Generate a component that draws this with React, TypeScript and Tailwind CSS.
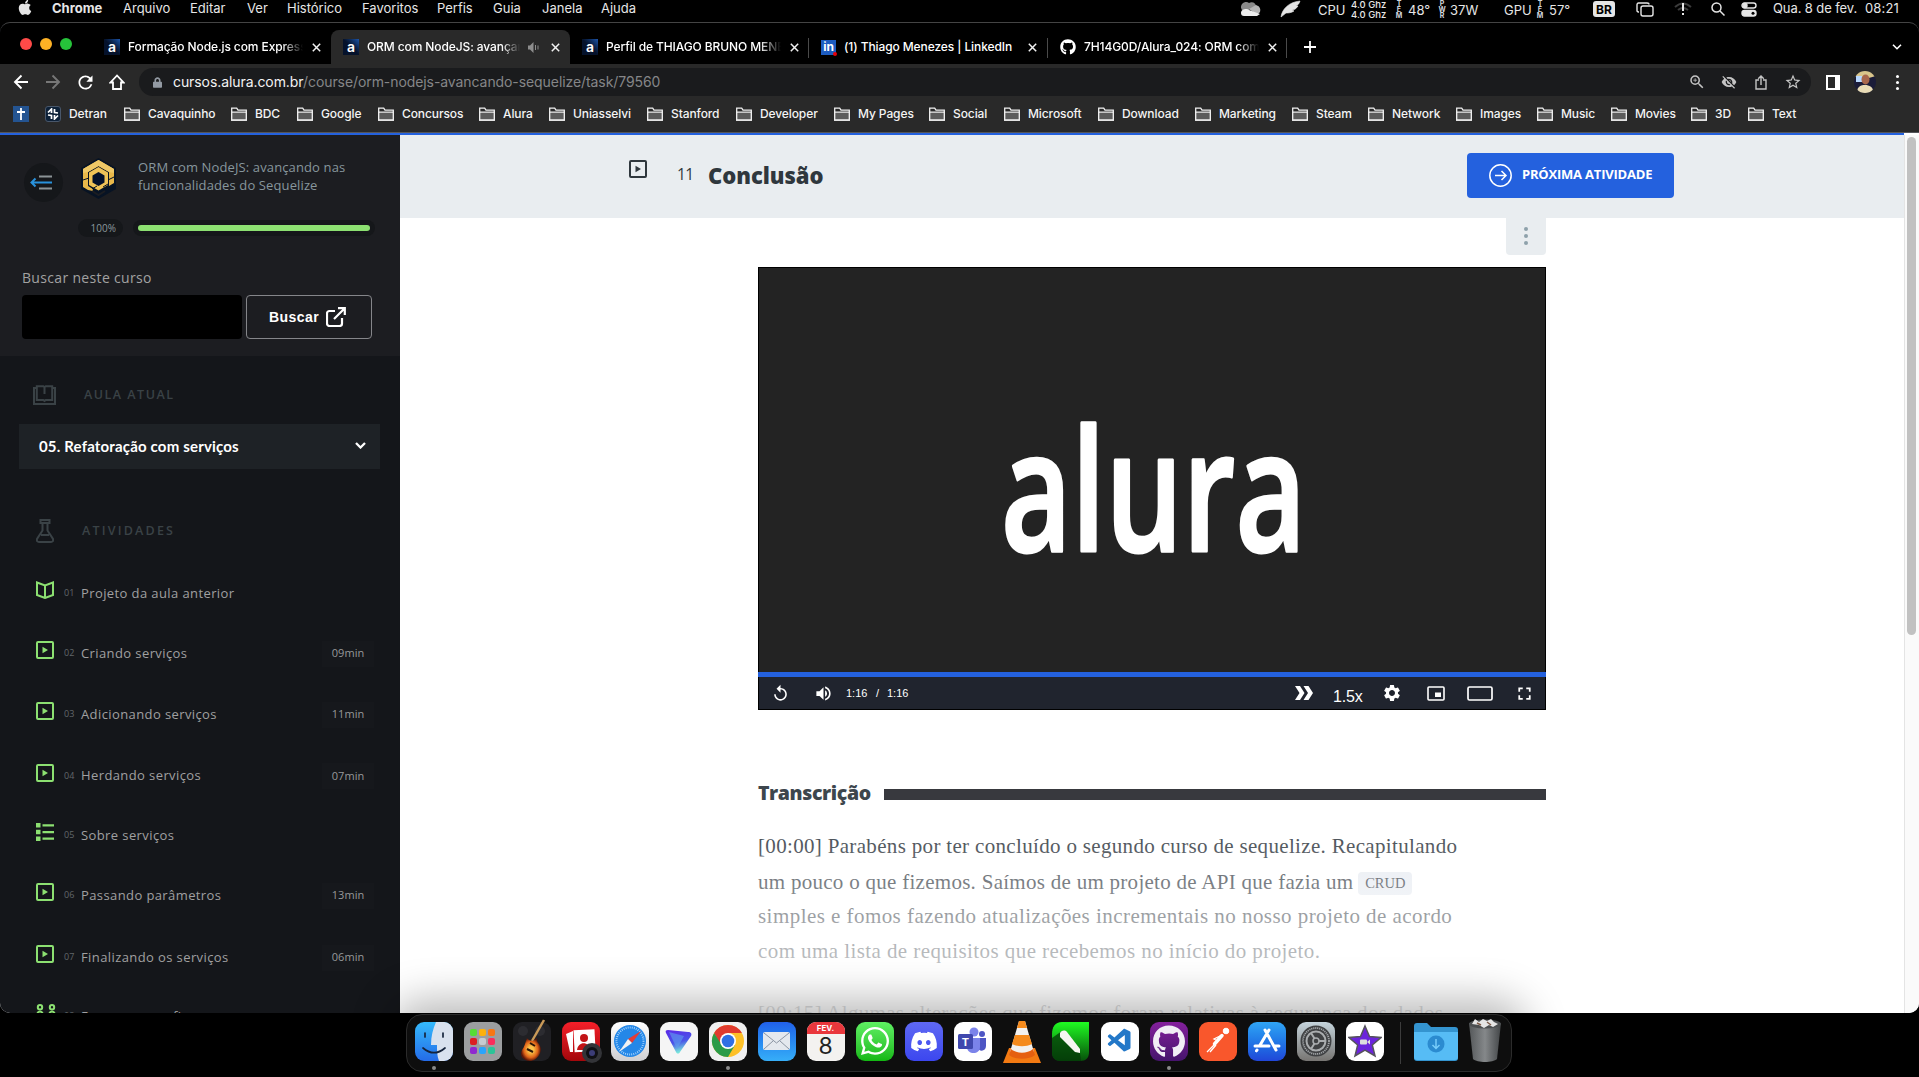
import React from "react";
import { FaApple, FaGithub, FaDiscord, FaWhatsapp, FaLock } from "react-icons/fa";
import { MdReplay, MdVolumeUp, MdSettings, MdFullscreen, MdVisibilityOff, MdZoomIn, MdStarBorder, MdRefresh } from "react-icons/md";
import { VscVscode } from "react-icons/vsc";

const menus: [string, string][] = [
  ["Arquivo", "w-[67px]"],
  ["Editar", "w-[57px]"],
  ["Ver", "w-[40px]"],
  ["Histórico", "w-[75px]"],
  ["Favoritos", "w-[75px]"],
  ["Perfis", "w-[56px]"],
  ["Guia", "w-[49px]"],
  ["Janela", "w-[59px]"],
  ["Ajuda", "w-[50px]"],
];

const Tiny = ({ t }: { t: string }) => (
  <span className="flex w-[6px] flex-col items-center pt-px text-[7px] font-bold leading-[6px] text-gray-300">
    {t.split("").map((c, i) => (
      <span key={i}>{c}</span>
    ))}
  </span>
);

function MenuBar() {
  return (
    <div className="flex h-[22px] shrink-0 items-start whitespace-nowrap bg-black text-[13px] leading-[17px] text-[#e6e6e6]">
      <div className="w-[52px] pl-[18px]">
        <FaApple className="mt-[-1px] h-[17px] w-[14px]" />
      </div>
      <b className="w-[71px] font-bold">Chrome</b>
      {menus.map(([m, w]) => (
        <span key={m} className={w}>{m}</span>
      ))}
      <div className="ml-auto flex w-[680px] items-start">
        <svg className="mr-[19px] mt-[2px] h-[14px] w-[22px]" viewBox="0 0 22 14">
          <path d="M4 9a5 5 0 0 1 6-8c4-2 7 1 7 3L6 10z" fill="#8a8a8a" />
          <path d="M10 7l7-4c3 1 5 3 4 7l-3 3z" fill="#b5b5b5" />
          <path d="M2 11c0-4 6-5 8-3l11 4-3 2H5c-2 0-3-1-3-3z" fill="#ededed" />
        </svg>
        <svg className="mr-[17px] h-[18px] w-[21px]" viewBox="0 0 21 18">
          <path d="M1 17C2 9 9 2 20 1c-1 3-2 4-4 5l2 0c-2 3-4 4-6 4l2 1c-3 2-6 2-8 2z" fill="#e6e6e6" stroke="#e6e6e6" strokeWidth=".6" />
        </svg>
        <span className="w-[33px] pt-[2px]">CPU</span>
        <span className="w-[45px] text-[9.5px] font-medium leading-[9.5px]">4.0 Ghz<br />4.0 Ghz</span>
        <Tiny t="TEM" />
        <span className="ml-[6px] w-[31px] pt-[2px]">48°</span>
        <Tiny t="PWR" />
        <span className="ml-[5px] w-[54px] pt-[2px]">37W</span>
        <span className="w-[33px] pt-[2px]">GPU</span>
        <Tiny t="TEM" />
        <span className="ml-[6px] w-[44px] pt-[2px]">57°</span>
        <span className="mt-[1px] flex h-[16px] w-[22px] items-center justify-center rounded-[3px] bg-[#e6e6e6] text-[12px] font-bold text-black">BR</span>
        <svg className="ml-[21px] mt-[2px] h-[15px] w-[18px]" viewBox="0 0 18 15" fill="none" stroke="#e6e6e6" strokeWidth="1.4">
          <rect x="5" y="4" width="12" height="10" rx="2" />
          <path d="M3 10H2.500C1.500 10 1 9.500 1 8.500V3c0-1 .5-2 1.500-2H11c1 0 2 .6 2 1.500" />
        </svg>
        <svg className="ml-[20px] mt-[2px] h-[14px] w-[18px]" viewBox="0 0 18 14" fill="none" stroke="#3c3c3c" strokeWidth="2">
          <path d="M1 5q8-7 16 0M4 8q5-4 10 0" />
          <path d="M9 1v8M9 11v2" stroke="#e6e6e6" />
        </svg>
        <svg className="ml-[19px] mt-[2px] h-[14px] w-[14px]" viewBox="0 0 14 14" fill="none" stroke="#e6e6e6" strokeWidth="1.5">
          <circle cx="5.500" cy="5.500" r="4.500" /><path d="M9 9l4.500 4.500" />
        </svg>
        <svg className="ml-[16px] mt-[2px] h-[15px] w-[16px]" viewBox="0 0 16 15" fill="none" stroke="#e6e6e6" strokeWidth="1.4">
          <rect x="1" y="1" width="14" height="5" rx="2.500" /><circle cx="4" cy="3.500" r="2" fill="#e6e6e6" />
          <rect x="1" y="8.500" width="14" height="5.500" rx="2.500" fill="#e6e6e6" /><circle cx="12" cy="11.200" r="1.500" fill="#000" stroke="none" />
        </svg>
        <span className="ml-[16px] w-[92px] tracking-[-0.1px]">Qua. 8 de fev.</span>
        <span className="tracking-[0.15px]">08:21</span>
      </div>
    </div>
  );
}

const AluraIcon = () => (
  <span className="flex h-4 w-4 shrink-0 items-center justify-center bg-gradient-to-tr from-[#05122b] via-[#05122b] to-[#1c54a8] text-[14px] font-semibold leading-none text-white">a</span>
);
const LinkedinIcon = () => (
  <span className="relative flex h-[15px] w-[15px] shrink-0 items-center justify-center bg-[#1d5cc0] text-[12px] font-bold leading-none text-white">
    in<i className="absolute -bottom-px -right-px h-1 w-1 rounded-full bg-red-600" />
  </span>
);
const Close = () => (
  <svg className="h-[9px] w-[9px] shrink-0" viewBox="0 0 9 9" stroke="#f2f2f2" strokeWidth="1.5"><path d="M.8.8l7.400 7.400M8.200.8L.8 8.200" /></svg>
);

function Tab({ icon, title, active, fade, sep }: { icon: React.ReactNode; title: string; active?: boolean; fade?: boolean; sep?: boolean }) {
  return (
    <div className={"relative flex h-[34px] w-[239px] shrink-0 items-center pl-[12px] " + (active ? "rounded-t-lg bg-[#292929]" : "")}>
      {icon}
      <span className={"ml-2 shrink-0 overflow-hidden whitespace-nowrap text-[12px] font-medium tracking-[-0.1px] text-white " + (active ? "w-[153px] " : "w-[175px] ") + (fade ? "[mask-image:linear-gradient(to_right,black_88%,transparent)]" : "")}>{title}</span>
      {active && (
        <svg className="ml-2 h-[11px] w-[11px] shrink-0" viewBox="0 0 11 11" fill="#8d8d8d"><path d="M0 3.500h2L5.500 0v11L2 7.500H0z" /><path d="M7 3h1v5H7zM9.500 3.500h1v4h-1z" /></svg>
      )}
      <span className={active ? "ml-3" : "ml-[9px]"}><Close /></span>
      {sep && <i className="absolute right-0 top-[8px] h-[20px] w-px bg-[#4a4a4a]" />}
    </div>
  );
}

function TabStrip() {
  return (
    <div className="flex h-[41px] shrink-0 items-end rounded-t-[10px] bg-black">
      <div className="flex h-[41px] w-[92px] shrink-0 items-center gap-2 pl-5">
        <i className="h-3 w-3 rounded-full bg-[#fe4a48]" />
        <i className="h-3 w-3 rounded-full bg-[#fdb225]" />
        <i className="h-3 w-3 rounded-full bg-[#26c33a]" />
      </div>
      <Tab icon={<AluraIcon />} title="Formação Node.js com Express" fade />
      <Tab icon={<AluraIcon />} title="ORM com NodeJS: avançando" active fade />
      <Tab icon={<AluraIcon />} title="Perfil de THIAGO BRUNO MENEZES" fade sep />
      <Tab icon={<LinkedinIcon />} title="(1) Thiago Menezes | LinkedIn" sep />
      <Tab icon={<FaGithub className="h-4 w-4 shrink-0 text-white" />} title="7H14G0D/Alura_024: ORM com" fade sep />
      <svg className="mb-[11px] ml-[17px] h-3 w-3" viewBox="0 0 12 12" stroke="#fff" strokeWidth="1.800"><path d="M6 0v12M0 6h12" /></svg>
      <svg className="mb-[14px] ml-auto mr-[17px] h-[6px] w-[10px]" viewBox="0 0 10 6" fill="none" stroke="#fff" strokeWidth="1.600"><path d="M1 .7l4 4 4-4" /></svg>
    </div>
  );
}

function Toolbar() {
  return (
    <div className="flex h-[36px] shrink-0 items-center bg-[#292929]">
      <svg className="ml-[13px] h-4 w-4" viewBox="0 0 16 16" fill="none" stroke="#fff" strokeWidth="1.900"><path d="M15 8H2M8.500 1.500L2 8l6.500 6.500" /></svg>
      <svg className="ml-4 h-4 w-4" viewBox="0 0 16 16" fill="none" stroke="#777" strokeWidth="1.900"><path d="M1 8h13M7.500 1.500L14 8l-6.500 6.500" /></svg>
      <MdRefresh className="ml-[14px] h-[21px] w-[21px] text-white" />
      <svg className="ml-[13px] h-4 w-4" viewBox="0 0 16 16" fill="none" stroke="#fff" strokeWidth="1.800"><path d="M8 1.500L1.500 8.500H4V15h8V8.500h2.500z" /></svg>
      <div className="ml-[14px] flex h-[28px] w-[1672px] items-center rounded-full bg-[#1a1b1d] pl-[14px]">
        <FaLock className="h-[11px] w-[9px] text-[#939aa3]" />
        <span className="mb-px ml-[11px] whitespace-nowrap text-[14px] tracking-[-0.08px] text-[#858688]"><span className="text-[#f3f3f3]">cursos.alura.com.br</span>/course/orm-nodejs-avancando-sequelize/task/79560</span>
        <div className="ml-auto flex w-[123px] shrink-0 items-center text-[#c4c4c4]">
          <MdZoomIn className="h-[18px] w-[18px]" />
          <MdVisibilityOff className="ml-[15px] h-4 w-4" />
          <svg className="ml-[18px] h-[15px] w-[12px]" viewBox="0 0 12 15" fill="none" stroke="currentColor" strokeWidth="1.400"><path d="M4 5H1v9h10V5H8M6 10V1.200M3.200 3.800L6 1l2.800 2.800" /></svg>
          <MdStarBorder className="ml-[17px] h-[18px] w-[18px]" />
        </div>
      </div>
      <span className="ml-[15px] h-[15px] w-[14px] border-2 border-r-[5px] border-white" />
      <svg className="ml-[14px] h-[22px] w-[22px] rounded-full" viewBox="0 0 22 22">
        <rect width="22" height="22" fill="#1b1c38" /><path d="M0 0h22v5L11 8 0 5z" fill="#d9c58a" /><path d="M2 5h6v6H2z" fill="#b9d9ff" />
        <ellipse cx="11.500" cy="8.500" rx="4" ry="5" fill="#a8674c" /><path d="M3 22c0-7 4-8 8-8s9 2 8 8z" fill="#e9dcb6" />
      </svg>
      <span className="ml-[20px] flex flex-col gap-[3px]">
        <i className="h-[3px] w-[3px] rounded-full bg-white" /><i className="h-[3px] w-[3px] rounded-full bg-white" /><i className="h-[3px] w-[3px] rounded-full bg-white" />
      </span>
    </div>
  );
}

const bookmarks: [string, string][] = [
  ["Cavaquinho", "w-[107px]"], ["BDC", "w-[66px]"], ["Google", "w-[81px]"], ["Concursos", "w-[101px]"], ["Alura", "w-[70px]"],
  ["Uniasselvi", "w-[98px]"], ["Stanford", "w-[89px]"], ["Developer", "w-[98px]"], ["My Pages", "w-[95px]"], ["Social", "w-[75px]"],
  ["Microsoft", "w-[94px]"], ["Download", "w-[97px]"], ["Marketing", "w-[97px]"], ["Steam", "w-[76px]"], ["Network", "w-[88px]"],
  ["Images", "w-[81px]"], ["Music", "w-[74px]"], ["Movies", "w-[80px]"], ["3D", "w-[57px]"], ["Text", "w-[60px]"],
];

function Bookmarks() {
  return (
    <div className="flex h-[32px] shrink-0 items-center whitespace-nowrap bg-[#292929] pb-[5px] text-[12px] font-medium tracking-[-0.1px] text-[#f4f4f4]">
      <span className="ml-[13px] flex h-4 w-4 items-center justify-center bg-[#245491]">
        <svg className="h-3 w-2" viewBox="0 0 8 12" stroke="#fff" strokeWidth="1.800"><path d="M4 0v12M0 4h8" /></svg>
      </span>
      <span className="ml-4 flex h-4 w-4 items-center justify-center rounded-[3px] border border-[#49576a] bg-[#0d2138]">
        <svg className="h-3 w-3" viewBox="0 0 12 12" fill="none" stroke="#fff" strokeWidth="1.700"><path d="M1 4.500L4.500 1v4M7.500 1v3.500L11 5M11 7.500L7.500 11V7M4.500 11V7.500L1 7" /></svg>
      </span>
      <span className="ml-2 w-[55px]">Detran</span>
      {bookmarks.map(([b, w]) => (
        <span key={b} className={"flex items-center " + w}>
          <svg className="mr-2 h-[14px] w-4 shrink-0" viewBox="0 0 16 14" stroke="#f0f0f0" strokeWidth="1.300"><path d="M.7 1.200h5l1.300 2h8.300v9.800H.7z" fill="#292929" /><path d="M.7 5.200h14.600V13H.7z" fill="#5c5c5c" /></svg>
          {b}
        </span>
      ))}
    </div>
  );
}

const PlaySquare = ({ className }: { className: string }) => (
  <svg className={className} viewBox="0 0 18 18" fill="none" stroke="currentColor"><rect x="1" y="1" width="16" height="16" rx="1" strokeWidth="2" /><path d="M6.500 5.800L12 9l-5.500 3.200z" fill="currentColor" stroke="none" /></svg>
);

function ActIcon({ kind }: { kind: string }) {
  const c = "h-[18px] w-[18px] text-[#8ce071]";
  if (kind === "book") return <svg className={c} viewBox="0 0 18 18" fill="none" stroke="currentColor" strokeWidth="2"><path d="M1 1.500L9 4.500l8-3V14l-8 3-8-3zM9 4.500V17" /></svg>;
  if (kind === "list") return <svg className={c} viewBox="0 0 18 18" fill="currentColor"><path d="M0 0h4.500v4.500H0zM0 6.800h4.500v4.500H0zM0 13.500h4.500V18H0zM6.500 1.200H18v2.200H6.500zM6.500 8H18v2.200H6.500zM6.500 14.600H18v2.200H6.500z" /></svg>;
  if (kind === "people") return <svg className="h-[18px] w-[20px] text-[#8ce071]" viewBox="0 0 20 18" fill="none" stroke="currentColor" strokeWidth="2"><circle cx="4" cy="3.300" r="2.200" /><circle cx="16" cy="3.300" r="2.200" /><path d="M1 12c0-6 6-6 6 0M13 12c0-6 6-6 6 0" /></svg>;
  return <PlaySquare className={c} />;
}

const acts: [string, string, string, string, string][] = [
  ["book", "01", "Projeto da aula anterior", "", "h-[60px]"],
  ["play", "02", "Criando serviços", "09min", "h-[60px]"],
  ["play", "03", "Adicionando serviços", "11min", "h-[62px]"],
  ["play", "04", "Herdando serviços", "07min", "h-[61px]"],
  ["list", "05", "Sobre serviços", "", "h-[58px]"],
  ["play", "06", "Passando parâmetros", "13min", "h-[62px]"],
  ["play", "07", "Finalizando os serviços", "06min", "h-[62px]"],
  ["people", "08", "Faça como eu fiz", "", "h-[56px]"],
];

function Sidebar() {
  return (
    <aside className="flex h-full w-[400px] shrink-0 flex-col overflow-hidden bg-[#14161a] font-['Open_Sans',sans-serif]">
      <div className="h-[221px] shrink-0 bg-[#1c1d21]">
        <div className="flex pt-[23px]">
          <span className="ml-6 mt-[5px] flex h-[39px] w-[39px] items-center justify-center rounded-full bg-[#15171a]">
            <svg className="-ml-[5px] h-[16px] w-[22px]" viewBox="0 0 22 16" fill="none"><path d="M9 1.500h13M9 13.500h13" stroke="#8b9396" strokeWidth="2" /><path d="M1.500 7.500H22M5.500 3.500l-4 4 4 4" stroke="#2992dc" strokeWidth="2" /></svg>
          </span>
          <svg className="ml-[18px] h-[41px] w-[35px]" viewBox="0 0 35 41">
            <path d="M17.500 0L35 10v21L17.500 41 0 31V10z" fill="#071324" />
            <path d="M17.500 2L33 11v14l-5 3V14l-10.500-6L7 14v14l5 3v2L7 32l-5-3V11z" fill="#e8b84a" />
            <path d="M17.500 2L33 11v4l-5-1-10.500-6L7 14l-5 1v-4z" fill="#efc866" />
            <path d="M17.500 9L27 14.500V27l-9.500 5.500L8 27V14.500z" fill="#efc257" />
            <path d="M17.500 14l6 3.500v7l-6 3.500-6-3.500v-7z" fill="#04102b" />
            <path d="M2 22l6-2M27 22l6-3M11 31l5-3M22 29l5-3" stroke="#071324" />
            <path d="M11 33l6.500 4 6.500-4" fill="none" stroke="#1c1d21" strokeWidth="2" />
          </svg>
          <p className="ml-[22px] whitespace-nowrap text-[13px] leading-[18px] tracking-[0.12px] text-[#87969d]">ORM com NodeJS: avançando nas<br />funcionalidades do Sequelize</p>
        </div>
        <div className="mt-[17px] flex items-center pl-[78px]">
          <span className="flex h-[18px] w-[45px] items-center justify-end rounded-full bg-[#15171a] pr-[7px] text-[10px] text-[#8b979c]">100%</span>
          <span className="ml-[10px] flex h-[16px] w-[242px] items-center rounded-full bg-[#15171a] px-[5px]"><i className="h-[6px] w-full rounded-full bg-[#8ce071]" /></span>
        </div>
        <p className="mt-[31px] pl-[22px] text-[14px] leading-[20px] tracking-[0.33px] text-[#a2a2a2]">Buscar neste curso</p>
        <div className="mt-[7px] flex pl-[22px]">
          <span className="h-[44px] w-[220px] rounded bg-black" />
          <button className="ml-1 flex h-[44px] w-[126px] items-center rounded border border-[#85868a] pl-[22px] font-['Liberation_Sans',sans-serif] text-[14px] font-bold tracking-[0.45px] text-white">
            Buscar
            <svg className="ml-[7px] h-5 w-5" viewBox="0 0 20 20" fill="none" stroke="#fff" strokeWidth="2.200"><path d="M9 4H3.500C2 4 1 5 1 6.500v10C1 18 2 19 3.500 19h10c1.500 0 2.500-1 2.500-2.500V11M12 1.200h6.800V8M18.500 1.500L8 12" /></svg>
          </button>
        </div>
      </div>
      <div className="mt-[29px] flex h-[22px] items-center pl-[33px] text-[12.5px] font-semibold tracking-[1.5px] text-[#3a4246]">
        <svg className="h-[20px] w-[23px]" viewBox="0 0 23 20" fill="none" stroke="currentColor" strokeWidth="2"><path d="M3.500 3H1v16h21V3h-2.500M3.800 1.200h6.500l1.200 1 1.200-1h6.500V15h-6.500l-1.200 1-1.200-1H3.800zM11.500 2v7" /></svg>
        <span className="ml-[28px]">AULA ATUAL</span>
      </div>
      <div className="ml-[19px] mt-[19px] flex h-[45px] w-[361px] shrink-0 items-center bg-[#1e2226] pl-[20px] pr-[14px] font-['Lato',sans-serif] text-[15px] font-bold tracking-[0.17px] text-white">
        05. Refatoração com serviços
        <svg className="mb-[2px] ml-auto h-[7px] w-[11px]" viewBox="0 0 11 7" fill="none" stroke="#fff" strokeWidth="2.300"><path d="M1 1l4.500 4.500L10 1" /></svg>
      </div>
      <div className="mt-[50px] flex h-[24px] shrink-0 items-center pl-[36px] text-[12.5px] font-semibold tracking-[2.200px] text-[#3a4246]">
        <svg className="h-[24px] w-[18px]" viewBox="0 0 18 24" fill="none" stroke="currentColor" strokeWidth="2"><path d="M4.500 1h9v3h-9zM6.500 4v7.500L1 20c-.5 2 .5 3 2 3h12c1.500 0 2.500-1 2-3l-5.500-8.500V4M5 16h8" /></svg>
        <span className="ml-[28px]">ATIVIDADES</span>
      </div>
      <div className="mt-[20px]">
        {acts.map(([k, n, t, m, h]) => (
          <div key={n} className={"flex items-center pl-[36px] " + h}>
            <span className="mb-[6px] w-[28px]"><ActIcon kind={k} /></span>
            <span className="w-[17px] text-[9px] text-[#62676b]">{n}</span>
            <span className="whitespace-nowrap pt-px text-[13px] tracking-[0.4px] text-[#a0a0a1]">{t}</span>
            {m && <span className="ml-auto mr-[26px] mt-px flex h-[26px] w-[52px] items-center justify-center bg-[#16181c] text-[11px] tracking-[0.05px] text-[#96989a]">{m}</span>}
          </div>
        ))}
      </div>
    </aside>
  );
}

function Video() {
  return (
    <div className="flex h-[443px] w-[788px] flex-col border border-black bg-[#232323]">
      <div className="flex-1">
        <svg className="h-[404px] w-[786px]" viewBox="0 0 786 404">
          <text x="242" y="283" textLength="305" lengthAdjust="spacingAndGlyphs" fill="#fff" stroke="#fff" strokeWidth="3" strokeLinejoin="round" className="font-['Open_Sans',sans-serif] text-[169px] font-semibold">alura</text>
        </svg>
      </div>
      <div className="-mx-px h-[5px] bg-[#2461de]" />
      <div className="flex h-[32px] items-center bg-[#20242e] pl-[12px] font-['Liberation_Sans',sans-serif] text-white">
        <MdReplay className="h-[19px] w-[19px]" />
        <MdVolumeUp className="ml-[24px] h-[19px] w-[19px]" />
        <span className="ml-[13px] w-[30px] text-[11px]">1:16</span>
        <span className="w-[11px] text-[11px]">/</span>
        <span className="text-[11px]">1:16</span>
        <svg className="ml-auto h-[14px] w-[18px]" viewBox="0 0 18 14" fill="#fff"><path d="M0 0h5l4.500 7L5 14H0l4.500-7zM8.500 0h5L18 7l-4.500 7h-5L13 7z" /></svg>
        <span className="ml-[20px] mt-[7px] w-[30px] text-[16px] leading-none tracking-[-0.2px]">1.5x</span>
        <MdSettings className="ml-[19px] h-[20px] w-[20px]" />
        <svg className="ml-[25px] h-[15px] w-[18px]" viewBox="0 0 18 15" fill="none" stroke="#fff" strokeWidth="1.600"><rect x="1" y="1" width="16" height="13" rx="1" /><rect x="8" y="6.500" width="6" height="4.500" fill="#fff" stroke="none" /></svg>
        <svg className="ml-[22px] h-[15px] w-[26px]" viewBox="0 0 26 15" fill="none" stroke="#fff" strokeWidth="1.700"><rect x="1" y="1" width="24" height="13" rx="1.500" /></svg>
        <MdFullscreen className="ml-[21px] mr-[10px] h-[21px] w-[21px]" />
      </div>
    </div>
  );
}

function Main() {
  return (
    <main className="relative h-full w-[1504px] overflow-hidden bg-white font-['Open_Sans',sans-serif]">
      <header className="flex h-[83px] items-center bg-[#e9edf0] pb-[3px] pl-[229px] text-[#2f373d]">
        <PlaySquare className="mb-[13px] h-[18px] w-[18px]" />
        <span className="ml-[30px] w-[31px] text-[15.500px] font-medium tracking-[-0.5px]">11</span>
        <h1 className="text-[22px] font-extrabold tracking-[-0.05px]">Conclusão</h1>
        <button className="ml-auto mr-[230px] flex h-[45px] w-[207px] items-center whitespace-nowrap rounded bg-[#2461de] pl-[22px] text-[13px] font-bold tracking-[-0.2px] text-white">
          <svg className="mr-[10px] h-[23px] w-[23px]" viewBox="0 0 23 23" fill="none" stroke="#fff" strokeWidth="1.500"><circle cx="11.500" cy="11.500" r="10.700" /><path d="M6 11.500h11M12.500 7l4.500 4.500-4.500 4.500" /></svg>
          PRÓXIMA ATIVIDADE
        </button>
      </header>
      <div className="ml-[1106px] flex h-[37px] w-[40px] flex-col items-center gap-[3px] rounded-b bg-[#e9edf0] pt-[9px]">
        <i className="h-1 w-1 rounded-full bg-[#8ea1ab]" /><i className="h-1 w-1 rounded-full bg-[#8ea1ab]" /><i className="h-1 w-1 rounded-full bg-[#8ea1ab]" />
      </div>
      <div className="mt-[12px] pl-[358px]">
        <Video />
        <div className="mt-[68px] flex w-[788px] items-center">
          <h2 className="w-[126px] text-[19.500px] font-extrabold leading-[30px] tracking-[-0.4px] text-[#3d464d]">Transcrição</h2>
          <span className="mt-[3px] h-[11px] flex-1 bg-[#38393e]" />
        </div>
        <div className="mt-[21px] whitespace-nowrap font-['Liberation_Serif',serif] text-[21px] leading-[35px] text-[#3d454c]">
          <p className="h-[36px] tracking-[0.33px]">[00:00] Parabéns por ter concluído o segundo curso de sequelize. Recapitulando</p>
          <p className="flex h-[34px] items-center tracking-[0.28px]">um pouco o que fizemos. Saímos de um projeto de API que fazia um <code className="ml-[5px] mt-[3px] flex h-[23px] w-[54px] items-center justify-center rounded bg-[#e8ecf2] font-['Liberation_Serif',serif] text-[14.500px] tracking-normal">CRUD</code></p>
          <p className="h-[35px] tracking-[0.45px]">simples e fomos fazendo atualizações incrementais no nosso projeto de acordo</p>
          <p className="h-[35px] tracking-[0.42px]">com uma lista de requisitos que recebemos no início do projeto.</p>
          <p className="mt-[27px] h-[35px] tracking-[0.3px]">[00:15] Algumas alterações que fizemos foram relativas à segurança dos dados</p>
        </div>
      </div>
      <div className="absolute inset-x-0 bottom-0 h-[190px] bg-gradient-to-b from-white/0 via-white/50 to-white/85" />
    </main>
  );
}

const Tile = ({ className = "", children }: { className?: string; children?: React.ReactNode }) => (
  <span className={"flex h-[39px] w-[38px] items-center justify-center overflow-hidden rounded-[9px] " + className}>{children}</span>
);
const Slot = ({ dot, children }: { dot?: boolean; children: React.ReactNode }) => (
  <span className="relative flex h-[56px] w-[49px] shrink-0 items-center justify-center pb-[4px]">
    {children}
    {dot && <i className="absolute bottom-[1px] h-1 w-1 rounded-full bg-[#8a8a8a]" />}
  </span>
);

function Dock() {
  return (
    <div className="absolute left-[406px] top-[1014px] flex h-[58px] w-[1106px] rounded-[16px] border border-[#2b2b2b] bg-[#0e0e0e] pl-[2px] shadow-[0_0_42px_14px_rgba(0,0,0,0.28)]">
      <Slot dot>
        <Tile><svg viewBox="0 0 38 39" className="h-full w-full"><defs><linearGradient id="fd" x2="0" y2="1"><stop stopColor="#35bafc" /><stop offset="1" stopColor="#246be8" /></linearGradient></defs><rect width="38" height="39" fill="url(#fd)" /><path d="M21 0c-3 7-5 14-5 23h6c0 6 0 11 2 16h14V0z" fill="#d9e1ee" /><path d="M10 11v4M28 11v4M8 26c7 6 15 6 22 0" stroke="#16243c" strokeWidth="1.700" fill="none" strokeLinecap="round" /></svg></Tile>
      </Slot>
      <Slot>
        <Tile className="bg-[#9c9ea0]">
          <span className="grid grid-cols-3 gap-[2px]">
            <i className="h-[7px] w-[7px] rounded-[2px] bg-[#55dd35]" /><i className="h-[7px] w-[7px] rounded-[2px] bg-[#fdb10c]" /><i className="h-[7px] w-[7px] rounded-[2px] bg-[#f87614]" />
            <i className="h-[7px] w-[7px] rounded-[2px] bg-[#dc1e22]" /><i className="h-[7px] w-[7px] rounded-[2px] bg-[#c6ccd0]" /><i className="h-[7px] w-[7px] rounded-[2px] bg-[#fb2d5c]" />
            <i className="h-[7px] w-[7px] rounded-[2px] bg-[#8f28cf]" /><i className="h-[7px] w-[7px] rounded-[2px] bg-[#2aa4fb]" /><i className="h-[7px] w-[7px] rounded-[2px] bg-[#2bc498]" />
          </span>
        </Tile>
      </Slot>
      <Slot>
        <svg className="-mt-[3px] h-[44px] w-[38px]" viewBox="0 0 38 44"><defs><radialGradient id="gt"><stop offset=".25" stopColor="#fbc44a" /><stop offset=".7" stopColor="#e06418" /><stop offset="1" stopColor="#5a1508" /></radialGradient></defs><rect y="4" width="38" height="39" rx="9" fill="#202024" /><circle cx="10" cy="13" r="5" fill="#2c2c31" /><circle cx="27" cy="13" r="5" fill="#2c2c31" /><path d="M19 23L31 2" stroke="#c99a58" strokeWidth="2.500" /><path d="M14 20c2 3 3 2 6 3l4-3c-1 4 2 5 3 8 3 6-3 15-10 15S6 37 9 32c3-4 3-7 5-12z" fill="url(#gt)" /><path d="M17 25l5 3M14 31l6 3" stroke="#2a1408" strokeWidth="2" /></svg>
      </Slot>
      <Slot>
        <span className="relative"><Tile className="bg-gradient-to-b from-[#f51f29] to-[#a3070b]"><svg className="h-[27px] w-[31px]" viewBox="0 0 31 27"><path d="M1 6l7-3v21H5z" fill="#fff" /><rect x="9" y="2" width="21" height="22" fill="#fff" transform="rotate(-3 15 12)" /><circle cx="19" cy="10" r="4" fill="#c21417" /><path d="M12 22c1-9 12-9 14 0z" fill="#c21417" /></svg></Tile>
          <svg className="absolute -bottom-[2px] -right-[2px] h-[20px] w-[20px]" viewBox="0 0 20 20"><circle cx="10" cy="10" r="10" fill="#333438" /><circle cx="10" cy="10" r="6" fill="#101014" /><circle cx="10" cy="10" r="3" fill="#3c3d77" /></svg></span>
      </Slot>
      <Slot>
        <Tile className="bg-gradient-to-b from-white to-[#cfcfd2]"><svg className="h-[34px] w-[34px]" viewBox="0 0 34 34"><circle cx="17" cy="17" r="16" fill="#2487e8" /><circle cx="17" cy="17" r="13.500" fill="none" stroke="#b5ddff" strokeWidth="2" strokeDasharray=".8 1.300" /><path d="M28 7L15 15l4 4z" fill="#e73c35" /><path d="M6 28l9-13 4 4z" fill="#f2f2f2" /></svg></Tile>
      </Slot>
      <Slot>
        <Tile className="bg-[#f5f5f5]"><svg className="h-[25px] w-[28px]" viewBox="0 0 28 25"><defs><linearGradient id="pv" x2=".3" y2="1"><stop stopColor="#5c27e8" /><stop offset=".6" stopColor="#4a54e8" /><stop offset="1" stopColor="#77e4dc" /></linearGradient></defs><path d="M3 1l20 2c3 0 4 2 3 4L15 23c-1 2-3 2-4 0L1 4C0 2 1 1 3 1z" fill="url(#pv)" /><path d="M4 3l15 4L12 20z" fill="#5fa0ee" opacity=".6" /></svg></Tile>
      </Slot>
      <Slot dot>
        <Tile className="bg-[#f0f0f0]"><svg className="h-[34px] w-[34px]" viewBox="0 0 34 34"><circle cx="17" cy="17" r="16" fill="#fdc027" /><path d="M3.100 9A16 16 0 0 1 30.900 9H17L9 20z" fill="#e03a2e" /><path d="M3.100 9A16 16 0 0 0 17 33l7-12-12 2z" fill="#2b9b48" /><circle cx="17" cy="17" r="8" fill="#fff" /><circle cx="17" cy="17" r="6.300" fill="#2f6fe4" /></svg></Tile>
      </Slot>
      <Slot>
        <Tile className="bg-gradient-to-b from-[#2260e8] to-[#37aef8]"><svg className="h-[18px] w-[27px]" viewBox="0 0 27 18"><rect width="27" height="18" rx="2" fill="#e4e8ee" /><path d="M1 1l12.500 10L26 1M1 17l9-8M26 17l-9-8" stroke="#8b95a3" fill="none" /></svg></Tile>
      </Slot>
      <Slot>
        <Tile className="flex-col !justify-start bg-[#f3f2f0]"><span className="h-[12px] w-full bg-[#e9373c] text-center text-[8px] font-bold leading-[13px] text-white">FEV.</span><span className="text-[23px] leading-[25px] text-[#222]">8</span></Tile>
      </Slot>
      <Slot>
        <Tile className="bg-gradient-to-b from-[#5ef062] to-[#12b812]"><FaWhatsapp className="h-[32px] w-[32px] text-white" /></Tile>
      </Slot>
      <Slot>
        <Tile className="bg-gradient-to-b from-[#5f68f3] to-[#3c46ef]"><FaDiscord className="h-[27px] w-[28px] text-white" /></Tile>
      </Slot>
      <Slot>
        <Tile className="bg-white"><svg className="h-[28px] w-[30px]" viewBox="0 0 30 28"><circle cx="24" cy="7" r="3" fill="#4d55c4" /><circle cx="16" cy="5" r="4.500" fill="#7b83ea" /><path d="M20 11h8v8c0 6-8 6-8 1z" fill="#4d55c4" /><path d="M9 11h13v9c0 8-13 8-13 0z" fill="#7b83ea" /><rect y="7" width="15" height="15" rx="1.500" fill="#4048ae" /><text x="7.500" y="18.500" textAnchor="middle" fill="#fff" className="text-[11px] font-bold">T</text></svg></Tile>
      </Slot>
      <Slot>
        <svg className="h-[43px] w-[38px]" viewBox="0 0 38 43"><path d="M6 28h26l6 15H0z" fill="#f37a12" /><path d="M16 1h6l9 31c-5 5-19 5-24 0z" fill="#f2f0ee" /><path d="M16 1h6l2 7h-10zM12 15h14l3 9c-6 3-14 3-20 0z" fill="#f58a1c" /><path d="M8 29c6 5 16 5 22 0l2 6c-6 5-20 5-26 0z" fill="#e55f10" /></svg>
      </Slot>
      <Slot>
        <svg className="h-[39px] w-[37px]" viewBox="0 0 37 39"><defs><linearGradient id="cd" x2="0" y2="1"><stop stopColor="#1ffb22" /><stop offset="1" stopColor="#06500a" /></linearGradient></defs><path d="M10 0h27v30c0 6-3 9-9 9H9c-6 0-9-3-9-9V12C0 5 3 0 10 0z" fill="url(#cd)" /><path d="M0 16l10-7 18 22 1 8H9c-6 0-9-3-9-9z" fill="#043808" opacity=".75" /><path d="M8 11c2-3 5-3 7-1l13 17 0 4-5-1L8 15z" fill="#f6f6f2" /></svg>
      </Slot>
      <Slot><Tile className="bg-white"><VscVscode className="h-[28px] w-[28px] text-[#2378c8]" /></Tile></Slot>
      <Slot dot><Tile className="bg-gradient-to-b from-[#84209c] to-[#46146c]"><FaGithub className="h-[33px] w-[32px] text-[#f1eef5]" /></Tile></Slot>
      <Slot>
        <Tile className="bg-[#f9572c]"><svg className="h-[28px] w-[25px]" viewBox="0 0 25 28" fill="none" stroke="#fff"><circle cx="21" cy="4" r="2.800" fill="#fff" /><path d="M17 8.500L9.500 17" strokeWidth="3.500" strokeLinecap="round" /><path d="M9 18l-7 7M11 18l-6 7M17 8l-8 4 2 1" strokeWidth="1.300" /></svg></Tile>
      </Slot>
      <Slot>
        <Tile className="bg-gradient-to-b from-[#30a4f4] to-[#2146d8]"><svg className="h-[28px] w-[28px]" viewBox="0 0 28 28" fill="none" stroke="#fff" strokeWidth="3" strokeLinecap="round"><path d="M16 3L6.500 19M12 3l11 20M2 19h14M21 19h5M4 23l-.5.800" /></svg></Tile>
      </Slot>
      <Slot>
        <Tile className="bg-gradient-to-b from-[#c5d4dc] to-[#777572]"><svg className="h-[34px] w-[34px]" viewBox="0 0 34 34" fill="none"><circle cx="17" cy="17" r="15.500" fill="#3f4143" /><circle cx="17" cy="17" r="13" stroke="#a2a5a8" strokeWidth="1.800" strokeDasharray="1.200 .8" /><circle cx="17" cy="17" r="9.500" stroke="#a9acae" strokeWidth="2" /><circle cx="17" cy="17" r="3" stroke="#a9acae" strokeWidth="1.500" /><path d="M20 17h7M15.500 14.500L12 9M15.500 19.500L12 25" stroke="#a9acae" strokeWidth="2" /></svg></Tile>
      </Slot>
      <Slot>
        <Tile className="bg-white"><svg className="h-[34px] w-[34px]" viewBox="0 0 34 34"><path d="M17 2l4.500 10.500L33 13.500l-8.700 7.500L27 32l-10-6L7 32l2.700-11L1 13.500l11.500-1z" fill="#6b24dc" stroke="#55535c" strokeWidth="1.500" /><rect x="12" y="15.500" width="7" height="5" rx="1" fill="#ddd" /><path d="M19 18l3-2.500v5z" fill="#ddd" /></svg></Tile>
      </Slot>
      <span className="ml-[11px] mt-[7px] h-[42px] w-px shrink-0 bg-[#3c3c3c]" />
      <svg className="ml-[13px] mt-[7px] h-[39px] w-[44px] shrink-0" viewBox="0 0 44 39"><path d="M0 4c0-2 1-3 3-3h10l4 4h24c2 0 3 1 3 3v28c0 2-1 3-3 3H3c-2 0-3-1-3-3z" fill="#3494cf" /><path d="M0 10h44v25c0 2-1 3-3 3H3c-2 0-3-1-3-3z" fill="#56bcf5" /><circle cx="22" cy="22" r="8.500" fill="#2b8bd0" /><path d="M22 17v9M18.500 23l3.500 3.500 3.500-3.500" stroke="#78cdfb" strokeWidth="1.500" fill="none" /></svg>
      <svg className="ml-[10px] mt-[3px] h-[44px] w-[34px] shrink-0" viewBox="0 0 34 44"><defs><linearGradient id="tr"><stop stopColor="#55585a" /><stop offset=".5" stopColor="#85888a" /><stop offset="1" stopColor="#434648" /></linearGradient></defs><path d="M1 5h32l-4 36c-4 4-20 4-24 0z" fill="url(#tr)" /><ellipse cx="17" cy="6" rx="16" ry="4.500" fill="#4b4e50" /><path d="M4 6l3-5 4 3 4-3 4 2 4-2 3 3 4 2-5 3-4-2-5 3-5-3z" fill="#e5e5e5" /><path d="M9 5l4 2M19 4l4 3" stroke="#7b5a48" strokeWidth="1.500" /></svg>
    </div>
  );
}

export default function App() {
  return (
    <div className="relative flex h-[1077px] w-[1919px] flex-col overflow-hidden bg-black font-['Inter',sans-serif]">
      <MenuBar />
      <div className="flex h-[991px] shrink-0 flex-col overflow-hidden rounded-[10px] border-t border-[#444] bg-[#14161a]">
        <TabStrip />
        <Toolbar />
        <Bookmarks />
        <div className="h-px shrink-0 bg-[#55565a]" />
        <div className="flex h-[2px] shrink-0 bg-white"><span className="w-[1904px] bg-[#2461de]" /></div>
        <div className="flex min-h-0 flex-1 bg-white">
          <Sidebar />
          <Main />
          <div className="w-[15px] border-l border-[#e4e4e4] bg-[#fafafa] pl-[2px] pt-[2px]"><div className="h-[498px] w-[9px] rounded-full bg-[#c1c1c1]" /></div>
        </div>
      </div>
      <Dock />
    </div>
  );
}
